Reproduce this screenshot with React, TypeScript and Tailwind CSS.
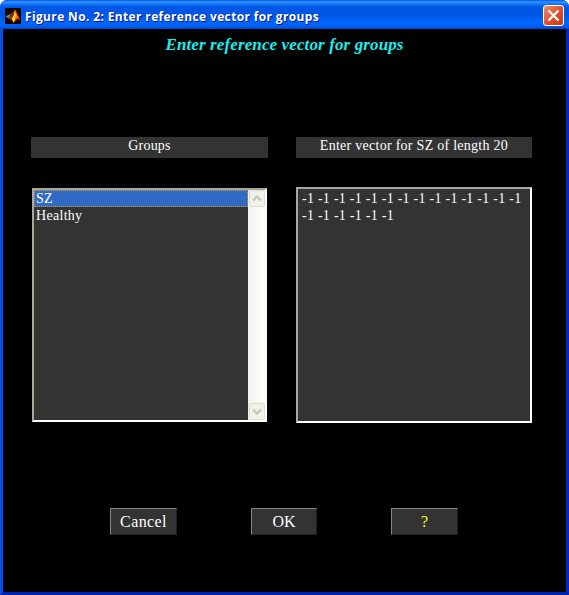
import React from 'react';

function MatlabIcon() {
  return (
    <svg width="16" height="16" viewBox="0 0 16 16" className="shrink-0">
      <rect width="16" height="16" fill="#080404" />
      <path d="M0.5 8.5 L5 6 L7.5 7.5 L4.5 11 Z" fill="#5f9294" />
      <path d="M5 6.5 L7.5 4.5 L10 1.5 L7 8.5 L4.5 11 L3.5 10 Z" fill="#7c3024" />
      <path d="M10 1 L12 5 L15.5 12.5 L12.5 10.8 L8.5 15 L6.5 11.5 L4.5 11 L7.5 8 Z" fill="#e52b0c" />
      <path d="M10 2 L11 7 L10 12 L8.5 14.5 L7 11 L9 7 Z" fill="#ffe22e" />
      <path d="M11 5 L13.5 9.5 L12 10 L10.5 11.5 Z" fill="#f47a16" />
    </svg>
  );
}

function CloseButton() {
  return (
    <button className="block h-[21px] w-[21px] shrink-0 rounded-[3px] border border-white bg-linear-to-br from-[#f0906c] via-[#e0502c] to-[#c63c14]">
      <svg width="19" height="19" viewBox="0 0 19 19">
        <path d="M4.5 4.5 L14.5 14.5 M14.5 4.5 L4.5 14.5" stroke="#fff" strokeWidth="2.3" />
      </svg>
    </button>
  );
}

function ScrollArrow({ up = false }: { up?: boolean }) {
  return (
    <div className="ml-px h-[17px] w-4 rounded-[2px] border border-[#dedcd0] bg-[#f1f0e9]">
      <svg width="14" height="15" viewBox="0 0 14 15">
        <path d={up ? 'M3 9.5 L7 5.5 L11 9.5' : 'M3 5.5 L7 9.5 L11 5.5'} fill="none" stroke="#c6c5bc" strokeWidth="2.2" />
      </svg>
    </div>
  );
}

function Label({ children, className }: { children: React.ReactNode; className: string }) {
  return (
    <div className={`h-[21px] bg-[#333] text-center text-[14px] leading-[18px] whitespace-nowrap ${className}`}>
      {children}
    </div>
  );
}

function PushButton({ children, className }: { children: React.ReactNode; className: string }) {
  return (
    <button
      className={`h-[27px] border border-t-[#858585] border-l-[#858585] border-r-[#202020] border-b-[#202020] bg-[#333] text-[16px] leading-[25px] ${className}`}
    >
      {children}
    </button>
  );
}

export default function App() {
  return (
    <div className="h-[595px] w-[569px] bg-white">
      <div className="flex h-full flex-col overflow-hidden rounded-t-[7px] bg-[#0831d9] font-['Liberation_Serif','Times_New_Roman',serif] text-white">
        <header className="flex h-[29px] shrink-0 items-center bg-[linear-gradient(180deg,#0058e6_0%,#3a93ff_7%,#1075f5_14%,#0058e6_25%,#0055e5_50%,#0066ff_78%,#0060f5_90%,#0047c8_100%)] pt-[2px] pr-[5px] pl-[5px]">
          <MatlabIcon />
          <h1 className="ml-1 w-[500px] origin-left scale-x-[0.92] font-['Open_Sans','Noto_Sans',sans-serif] text-[13px] leading-[18px] font-bold tracking-[0.41px] whitespace-nowrap [text-shadow:1px_1px_#0a1883]">
            Figure No. 2: Enter reference vector for groups
          </h1>
          <div className="ml-auto">
            <CloseButton />
          </div>
        </header>
        <main className="h-[566px] border-x-[3px] border-b-[3px] border-x-[#0650e8] border-r-[#0029bd] border-b-[#0023b5] bg-black">
          <h2 className="h-[108px] pt-[5px] text-center text-[17px] leading-[22px] font-bold tracking-[0.12px] text-[#1ceeee] italic whitespace-nowrap">
            Enter reference vector for groups
          </h2>
          <section className="flex gap-7 pl-7">
            <Label className="w-[237px] tracking-[0.2px]">Groups</Label>
            <Label className="w-[236px] tracking-[0.27px]">Enter vector for SZ of length 20</Label>
          </section>
          <section className="flex items-center gap-[29px] pt-[29px] pl-[29px]">
            <div className="flex h-[234px] w-[235px] border-2 border-t-[#aaa799] border-r-[#fffff5] border-b-[#fffff5] border-l-[#aaa799] bg-[#333]">
              <ul className="flex-1 text-[14px] leading-[17px] tracking-[0.3px]">
                <li className="h-[17px] bg-[#316ac5] px-[2px] outline-1 -outline-offset-1 outline-dotted outline-[#ce953a]">SZ</li>
                <li className="h-[17px] px-[2px]">Healthy</li>
              </ul>
              <div className="flex w-[17px] flex-col justify-between bg-linear-to-r from-[#f3f1ec] to-[#fefefb]">
                <ScrollArrow up />
                <ScrollArrow />
              </div>
            </div>
            <div className="h-[236px] w-[236px] border-2 border-t-[#aaa799] border-r-[#fffff5] border-b-[#fffff5] border-l-[#aaa799] bg-[#333] pt-px pl-1 text-[14px] leading-[17px] tracking-[0.26px] whitespace-nowrap">
              <p>-1 -1 -1 -1 -1 -1 -1 -1 -1 -1 -1 -1 -1 -1</p>
              <p>-1 -1 -1 -1 -1 -1</p>
            </div>
          </section>
          <footer className="flex pt-[85px] pl-[107px]">
            <PushButton className="w-[67px] tracking-[0.4px]">Cancel</PushButton>
            <PushButton className="ml-[74px] w-[66px]">OK</PushButton>
            <PushButton className="ml-[74px] w-[67px] text-[#ffff00]">?</PushButton>
          </footer>
        </main>
      </div>
    </div>
  );
}
